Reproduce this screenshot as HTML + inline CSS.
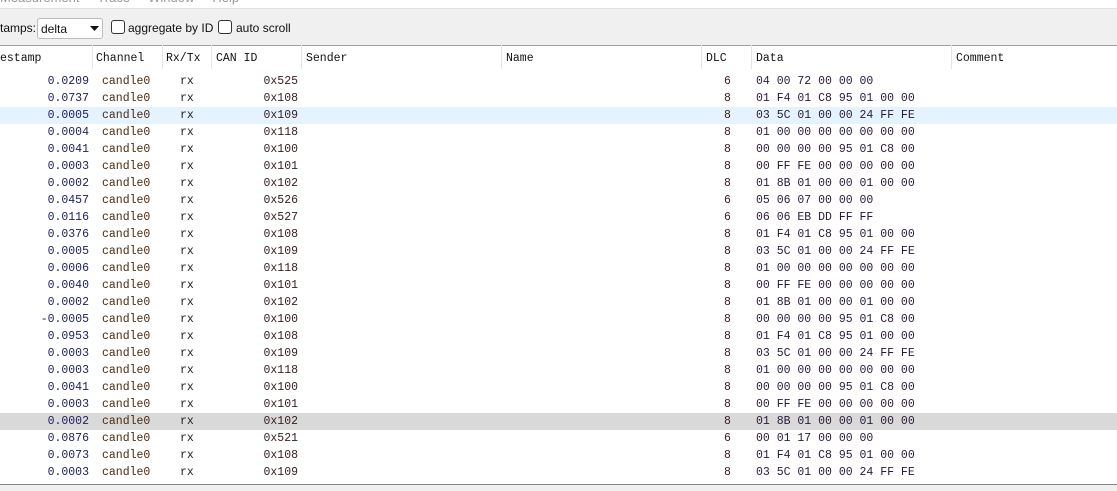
<!DOCTYPE html>
<html><head><meta charset="utf-8"><style>
body{margin:0;width:1117px;height:490px;overflow:hidden;background:#fff;position:relative;font-family:"Liberation Sans",sans-serif}
.menu{position:absolute;left:0;top:-10px;font-size:13px;color:#999;white-space:pre}
.tb{position:absolute;left:0;top:8px;width:1117px;height:36px;background:#f0f0f0;border-top:1px solid #e3e3e3;border-bottom:1px solid #a0a0a0;font-size:12px;color:#111}
.tb>span{position:absolute;top:12px}
.combo{position:absolute;left:37px;top:9px;width:66px;height:21px;background:#fff;border:1px solid #bdbdbd;border-radius:3px;box-sizing:border-box}
.combo span{position:absolute;left:3px;top:3px}
.cb{position:absolute;top:11px;width:12px;height:12px;border:1px solid #333;border-radius:3px;background:#fff}
.hd{position:absolute;top:52px;font:11.5px "Liberation Mono",monospace;color:#111}
.sep{position:absolute;top:45px;width:1px;height:24px;background:#e5e5e5}
.r{position:absolute;left:0;width:1117px;height:17px;font:11.5px "Liberation Mono",monospace;white-space:pre}
.r span{position:absolute;top:2px}
.ts{right:1028px;color:#1e2060;text-align:right}
.ch{left:102px;color:#4a2a10}
.rx{left:180px;color:#222}
.id{right:819px;color:#3a2020}
.dlc{left:724px;color:#3a2020}
.dt{left:756px;color:#2a1a3a}
.bot{position:absolute;left:0;top:484px;width:1117px;height:6px;background:#f0f0f0;border-top:1px solid #888}
</style></head><body>
<div class="menu">Measurement     Trace     Window     Help</div>
<div class="tb">
<span style="left:0">tamps:</span>
<div class="combo"><span>delta</span><svg style="position:absolute;left:52px;top:7px" width="9" height="6"><path d="M0 0H9L4.5 5Z" fill="#111"/></svg></div>
<div class="cb" style="left:111px"></div><span style="left:128px">aggregate by ID</span>
<div class="cb" style="left:218px"></div><span style="left:236px">auto scroll</span>
</div>
<div class="hd" style="left:0">estamp</div>
<div class="hd" style="left:96px">Channel</div>
<div class="hd" style="left:166px">Rx/Tx</div>
<div class="hd" style="left:216px">CAN ID</div>
<div class="hd" style="left:306px">Sender</div>
<div class="hd" style="left:506px">Name</div>
<div class="hd" style="left:706px">DLC</div>
<div class="hd" style="left:756px">Data</div>
<div class="hd" style="left:956px">Comment</div>
<div class="sep" style="left:92px"></div><div class="sep" style="left:162px"></div><div class="sep" style="left:211px"></div><div class="sep" style="left:301px"></div><div class="sep" style="left:501px"></div><div class="sep" style="left:701px"></div><div class="sep" style="left:751px"></div><div class="sep" style="left:951px"></div>
<div id="rows"></div>
<div class="bot"></div>
<script>
var d=[["0.0209","0x525","6","04 00 72 00 00 00"],["0.0737","0x108","8","01 F4 01 C8 95 01 00 00"],["0.0005","0x109","8","03 5C 01 00 00 24 FF FE"],["0.0004","0x118","8","01 00 00 00 00 00 00 00"],["0.0041","0x100","8","00 00 00 00 95 01 C8 00"],["0.0003","0x101","8","00 FF FE 00 00 00 00 00"],["0.0002","0x102","8","01 8B 01 00 00 01 00 00"],["0.0457","0x526","6","05 06 07 00 00 00"],["0.0116","0x527","6","06 06 EB DD FF FF"],["0.0376","0x108","8","01 F4 01 C8 95 01 00 00"],["0.0005","0x109","8","03 5C 01 00 00 24 FF FE"],["0.0006","0x118","8","01 00 00 00 00 00 00 00"],["0.0040","0x101","8","00 FF FE 00 00 00 00 00"],["0.0002","0x102","8","01 8B 01 00 00 01 00 00"],["-0.0005","0x100","8","00 00 00 00 95 01 C8 00"],["0.0953","0x108","8","01 F4 01 C8 95 01 00 00"],["0.0003","0x109","8","03 5C 01 00 00 24 FF FE"],["0.0003","0x118","8","01 00 00 00 00 00 00 00"],["0.0041","0x100","8","00 00 00 00 95 01 C8 00"],["0.0003","0x101","8","00 FF FE 00 00 00 00 00"],["0.0002","0x102","8","01 8B 01 00 00 01 00 00"],["0.0876","0x521","6","00 01 17 00 00 00"],["0.0073","0x108","8","01 F4 01 C8 95 01 00 00"],["0.0003","0x109","8","03 5C 01 00 00 24 FF FE"]];
var h="";d.forEach(function(r,i){var bg=i==2?"#e5f3ff":(i==20?"#d9d9d9":"transparent");
h+='<div class="r" style="top:'+(73+i*17)+'px;background:'+bg+'"><span class="ts">'+r[0]+'</span><span class="ch">candle0</span><span class="rx">rx</span><span class="id">'+r[1]+'</span><span class="dlc">'+r[2]+'</span><span class="dt">'+r[3]+'</span></div>';});
document.getElementById("rows").innerHTML=h;
</script>
</body></html>
